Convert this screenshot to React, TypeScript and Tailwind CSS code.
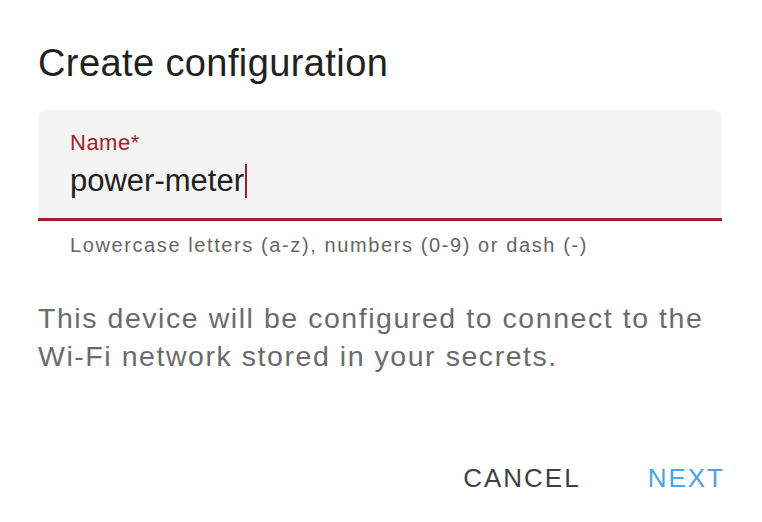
import React from 'react';

export default function App() {
  return (
    <div className="w-[762px] h-[522px] bg-white font-['Liberation_Sans',Arial,sans-serif]">
      {/* Dialog */}
      <div className="pl-[38px] pr-[40px] pt-[40px]">
        <h2 className="text-[38px] leading-[46px] tracking-[0.4px] text-[#212121]">Create configuration</h2>

        {/* Name field */}
        <div className="mt-[24px]">
          <div className="h-[111px] rounded-t-[8px] bg-[#f4f4f4] border-b-[3px] border-[#a61e27] pl-[32px] pt-[20px]">
            <div className="text-[22px] leading-[26px] tracking-[0.5px] text-[#a61e27]">Name*</div>
            <div className="mt-[7px] flex items-center h-[36px] text-[31px] text-[#212121]">
              <span className="leading-[36px]">power-meter</span>
              <span className="ml-[1px] h-[34px] w-[2px] bg-[#a61e27]" />
            </div>
          </div>
          <p className="mt-[13px] pl-[32px] text-[20px] leading-[22px] tracking-[1.6px] text-[#666666] whitespace-nowrap">
            Lowercase letters (a-z), numbers (0-9) or dash (-)
          </p>
        </div>

        <p className="mt-[43px] text-[28.5px] leading-[38px] tracking-[1.55px] text-[#6b6b6b] whitespace-nowrap">
          This device will be configured to connect to the
          <br />
          Wi-Fi network stored in your secrets.
        </p>
      </div>

      {/* Actions */}
      <div className="mt-[88px] flex justify-end gap-[67px] pr-[37px] text-[26px] leading-[30px] tracking-[2px]">
        <button className="text-[#3f3f3f]">CANCEL</button>
        <button className="text-[#4aa3ec]">NEXT</button>
      </div>
    </div>
  );
}
